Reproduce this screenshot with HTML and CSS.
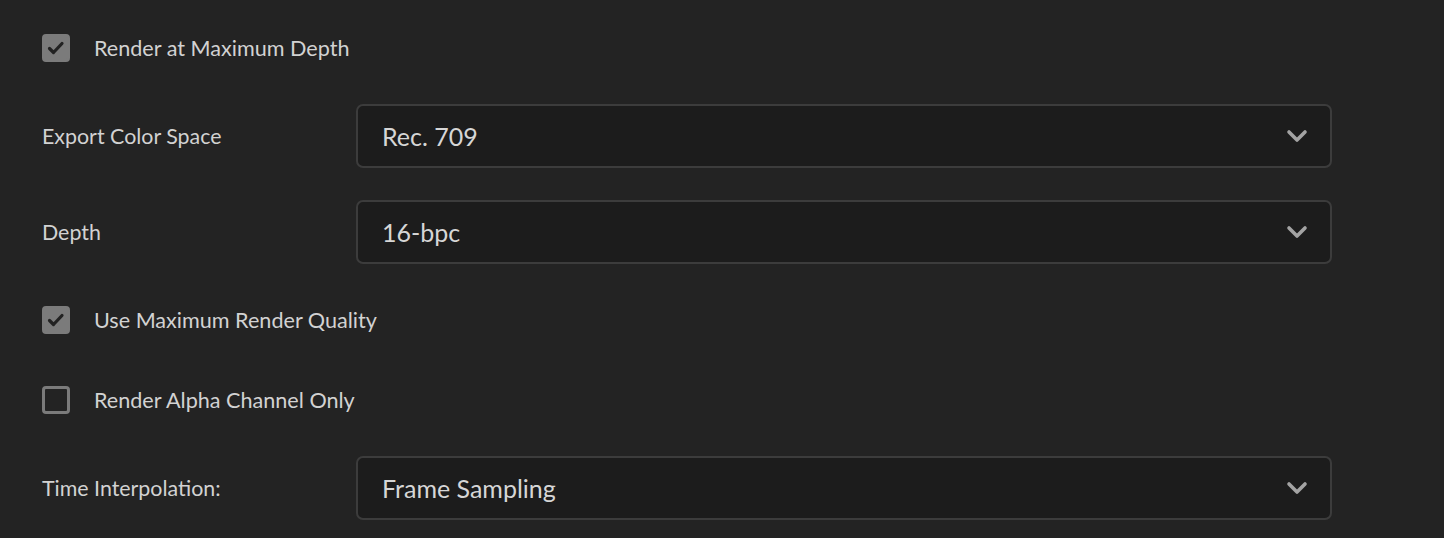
FILE: index.html
```html
<!DOCTYPE html>
<html>
<head>
<meta charset="utf-8">
<link rel="stylesheet" href="styles.css">
</head>
<body>
<div class="panel">
  <div class="row check-row">
    <span class="box checked"><svg viewBox="0 0 28 28" width="28" height="28"><path d="M7.5 14.5 L11.5 18.5 L20 9.5" fill="none" stroke="#222" stroke-width="3.2" stroke-linecap="round" stroke-linejoin="round"/></svg></span>
    <span class="check-label">Render at Maximum Depth</span>
  </div>
  <div class="row select-row">
    <span class="label">Export Color Space</span>
    <div class="select"><span class="value">Rec. 709</span><svg class="chev" viewBox="0 0 22 14" width="22" height="14"><path d="M3 3 L11 11 L19 3" fill="none" stroke="#a3a3a3" stroke-width="3.6" stroke-linecap="round" stroke-linejoin="round"/></svg></div>
  </div>
  <div class="row select-row">
    <span class="label">Depth</span>
    <div class="select"><span class="value">16-bpc</span><svg class="chev" viewBox="0 0 22 14" width="22" height="14"><path d="M3 3 L11 11 L19 3" fill="none" stroke="#a3a3a3" stroke-width="3.6" stroke-linecap="round" stroke-linejoin="round"/></svg></div>
  </div>
  <div class="row check-row">
    <span class="box checked"><svg viewBox="0 0 28 28" width="28" height="28"><path d="M7.5 14.5 L11.5 18.5 L20 9.5" fill="none" stroke="#222" stroke-width="3.2" stroke-linecap="round" stroke-linejoin="round"/></svg></span>
    <span class="check-label">Use Maximum Render Quality</span>
  </div>
  <div class="row check-row">
    <span class="box"></span>
    <span class="check-label">Render Alpha Channel Only</span>
  </div>
  <div class="row select-row">
    <span class="label">Time Interpolation:</span>
    <div class="select"><span class="value">Frame Sampling</span><svg class="chev" viewBox="0 0 22 14" width="22" height="14"><path d="M3 3 L11 11 L19 3" fill="none" stroke="#a3a3a3" stroke-width="3.6" stroke-linecap="round" stroke-linejoin="round"/></svg></div>
  </div>
</div>
</body>
</html>
```

FILE: styles.css
```css
html, body {
  margin: 0;
  padding: 0;
  background: #232323;
  height: 100%;
  overflow: hidden;
}
body {
  font-family: "Lato", "Open Sans", sans-serif;
  color: #d2d2d2;
}
.panel {
  display: flex;
  flex-direction: column;
  gap: 32px;
  padding: 24px 0 0 42px;
}
.row {
  display: flex;
  align-items: center;
}
.check-row {
  height: 48px;
}
.select-row {
  height: 64px;
}
.box {
  width: 28px;
  height: 28px;
  box-sizing: border-box;
  border: 3px solid #7b7b7b;
  border-radius: 4px;
  display: flex;
  align-items: center;
  justify-content: center;
  flex-shrink: 0;
}
.box.checked {
  background: #7b7b7b;
}
.box svg {
  flex-shrink: 0;
}
.check-label {
  margin-left: 24px;
  font-size: 21.6px;
}
.label {
  width: 314px;
  font-size: 21.4px;
  flex-shrink: 0;
}
.select {
  width: 976px;
  height: 64px;
  box-sizing: border-box;
  border: 2px solid #3c3c3c;
  border-radius: 7px;
  background: #1c1c1c;
  display: flex;
  align-items: center;
  justify-content: space-between;
  padding: 0 22px 0 24px;
}
.value {
  font-size: 25px;
  color: #d6d6d6;
}
.chev {
  display: block;
}
```
